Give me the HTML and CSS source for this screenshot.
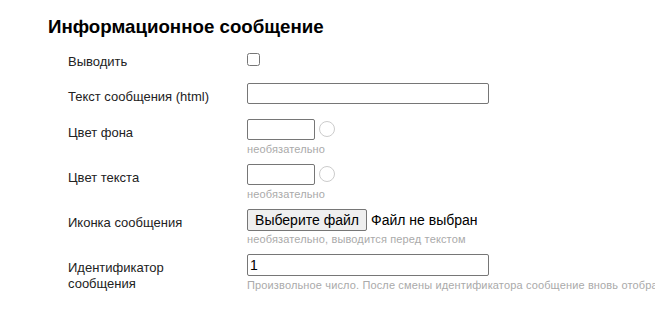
FILE: index.html
```html
<!DOCTYPE html>
<html lang="ru">
<head>
  <meta charset="UTF-8" />
  <meta name="viewport" content="width=device-width, initial-scale=1" />
  <title>Информационное сообщение</title>
  <link rel="stylesheet" href="styles.css">
</head>
<body>

<section class="settings">
  <h2>Информационное сообщение</h2>

  <div class="form-grid">
    <div class="row row-check">
      <label class="label" for="msg-show">Выводить</label>
      <div class="field">
        <input type="checkbox" id="msg-show" class="check" />
      </div>
    </div>

    <div class="row">
      <label class="label" for="msg-text">Текст сообщения (html)</label>
      <div class="field">
        <input type="text" id="msg-text" class="text-input wide" />
      </div>
    </div>

    <div class="row">
      <label class="label" for="msg-bg">Цвет фона</label>
      <div class="field">
        <div class="color-pick">
          <input type="text" id="msg-bg" class="text-input short" />
          <span class="swatch"></span>
        </div>
        <div class="hint">необязательно</div>
      </div>
    </div>

    <div class="row">
      <label class="label" for="msg-color">Цвет текста</label>
      <div class="field">
        <div class="color-pick">
          <input type="text" id="msg-color" class="text-input short" />
          <span class="swatch"></span>
        </div>
        <div class="hint">необязательно</div>
      </div>
    </div>

    <div class="row">
      <label class="label" for="msg-icon">Иконка сообщения</label>
      <div class="field">
        <div class="file-pick">
          <button type="button" id="msg-icon" class="file-btn">Выберите файл</button>
          <span class="file-name">Файл не выбран</span>
        </div>
        <div class="hint">необязательно, выводится перед текстом</div>
      </div>
    </div>

    <div class="row">
      <label class="label" for="msg-id">Идентификатор<br>сообщения</label>
      <div class="field">
        <input type="text" id="msg-id" class="text-input wide tall" value="1" />
        <div class="hint">Произвольное число. После смены идентификатора сообщение вновь отобразится всем пользователям</div>
      </div>
    </div>
  </div>
</section>

</body>
</html>
```

FILE: styles.css
```css
body {
  font-family: "Liberation Sans", Arial, sans-serif;
  margin: 0;
  background-color: #fff;
  color: #222;
  overflow: hidden;
}
.settings {
  padding: 16px 0 0 48px;
}
h2 {
  margin: 0 0 12px;
  font-size: 18.72px;
  line-height: 22px;
  font-weight: bold;
  color: #000;
}
.form-grid {
  padding-left: 20px;
  display: flex;
  flex-direction: column;
}
.row {
  display: grid;
  grid-template-columns: 179px 1fr;
  padding-bottom: 15px;
}
.label {
  padding-top: 6px;
  margin-bottom: -2px;
  font-size: 13px;
  line-height: 16px;
  color: #222;
}
.row-check {
  padding-bottom: 13px;
}
.row-check .label {
  padding-top: 4px;
  margin-bottom: 0;
}
.field {
  min-width: 0;
}
.check {
  margin: 3px 0 0;
  width: 13px;
  height: 13px;
  display: block;
}
.text-input {
  box-sizing: border-box;
  height: 21px;
  margin: 0;
  padding: 1px 2px;
  border: 1px solid #767676;
  border-radius: 2px;
  font-family: "Liberation Sans", Arial, sans-serif;
  font-size: 14px;
  color: #000;
  display: block;
}
.wide {
  width: 242px;
}
.tall {
  height: 22px;
}
.short {
  width: 68px;
}
.color-pick,
.file-pick {
  display: flex;
  align-items: center;
}
.swatch {
  box-sizing: border-box;
  width: 16px;
  height: 16px;
  margin-left: 4px;
  margin-top: -2px;
  border: 1px solid #ccc;
  border-radius: 50%;
}
.file-btn {
  box-sizing: border-box;
  height: 22px;
  width: 120px;
  margin: 0 0 -1px;
  padding: 0;
  border: 1px solid #767676;
  border-radius: 2px;
  background-color: #efefef;
  font-family: "Liberation Sans", Arial, sans-serif;
  font-size: 14px;
  color: #000;
}
.file-name {
  margin-left: 4px;
  font-size: 14px;
  color: #000;
}
.hint {
  margin: 3px 0 -7px;
  font-size: 11px;
  line-height: 13px;
  letter-spacing: 0.14px;
  color: #aaa;
  white-space: nowrap;
}
```
